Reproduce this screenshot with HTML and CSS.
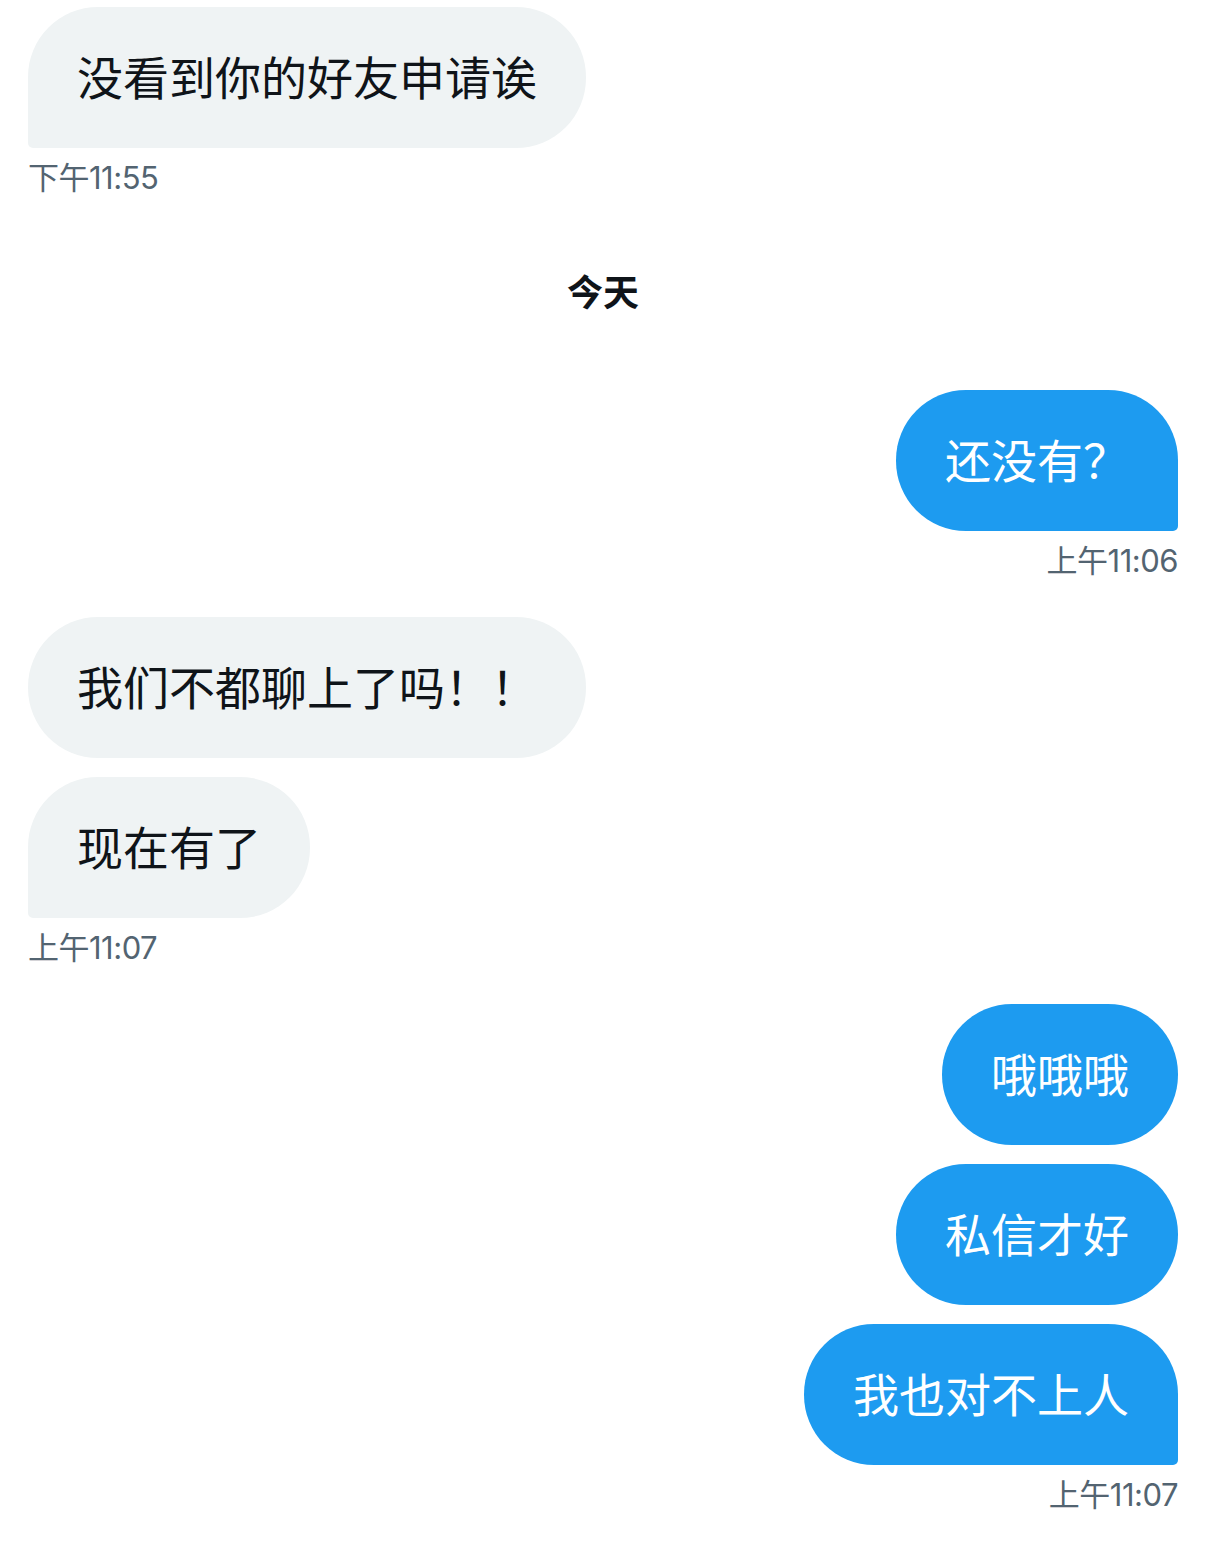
FILE: index.html
```html
<!DOCTYPE html>
<html>
    <head>
        <title>messages</title>
        <link rel="stylesheet" href="styles.css">
    </head>
    <body>
        <div class="chat">
            <div class="group in">
                <div class="bubble last">没看到你的好友申请诶</div>
                <div class="time">下午11:55</div>
            </div>

            <div class="day">今天</div>

            <div class="group out first-after-day">
                <div class="bubble last">还没有？</div>
                <div class="time">上午11:06</div>
            </div>

            <div class="group in">
                <div class="bubble">我们不都聊上了吗！！</div>
                <div class="bubble last">现在有了</div>
                <div class="time">上午11:07</div>
            </div>

            <div class="group out">
                <div class="bubble">哦哦哦</div>
                <div class="bubble">私信才好</div>
                <div class="bubble last">我也对不上人</div>
                <div class="time">上午11:07</div>
            </div>
        </div>
    </body>
</html>
```

FILE: styles.css
```css
body{
    margin:0;
    background-color:#ffffff;
    font-family:"Inter","Noto Sans CJK SC",sans-serif;
}
.chat{
    display:flex;
    flex-direction:column;
    padding:7px 28px;
}
.group{
    display:flex;
    flex-direction:column;
    gap:19px;
    margin-top:36px;
}
.group:first-child{
    margin-top:0;
}
.group.in{
    align-items:flex-start;
}
.group.out{
    align-items:flex-end;
}
.first-after-day{
    margin-top:72px;
}
.bubble{
    box-sizing:border-box;
    height:141px;
    padding:0 49px 6px;
    display:flex;
    align-items:center;
    border-radius:70px;
    font-size:46px;
    white-space:nowrap;
}
.in .bubble{
    background-color:#eff3f4;
    color:#0f1419;
}
.out .bubble{
    background-color:#1d9bf0;
    color:#ffffff;
}
.in .bubble.last{
    border-bottom-left-radius:5px;
}
.out .bubble.last{
    border-bottom-right-radius:5px;
}
.time{
    margin-top:-9px;
    line-height:40px;
    font-size:31px;
    color:#536471;
    letter-spacing:-0.5px;
}
.day{
    margin-top:70px;
    line-height:50px;
    text-align:center;
    font-size:36px;
    font-weight:bold;
    color:#0f1419;
}
```
